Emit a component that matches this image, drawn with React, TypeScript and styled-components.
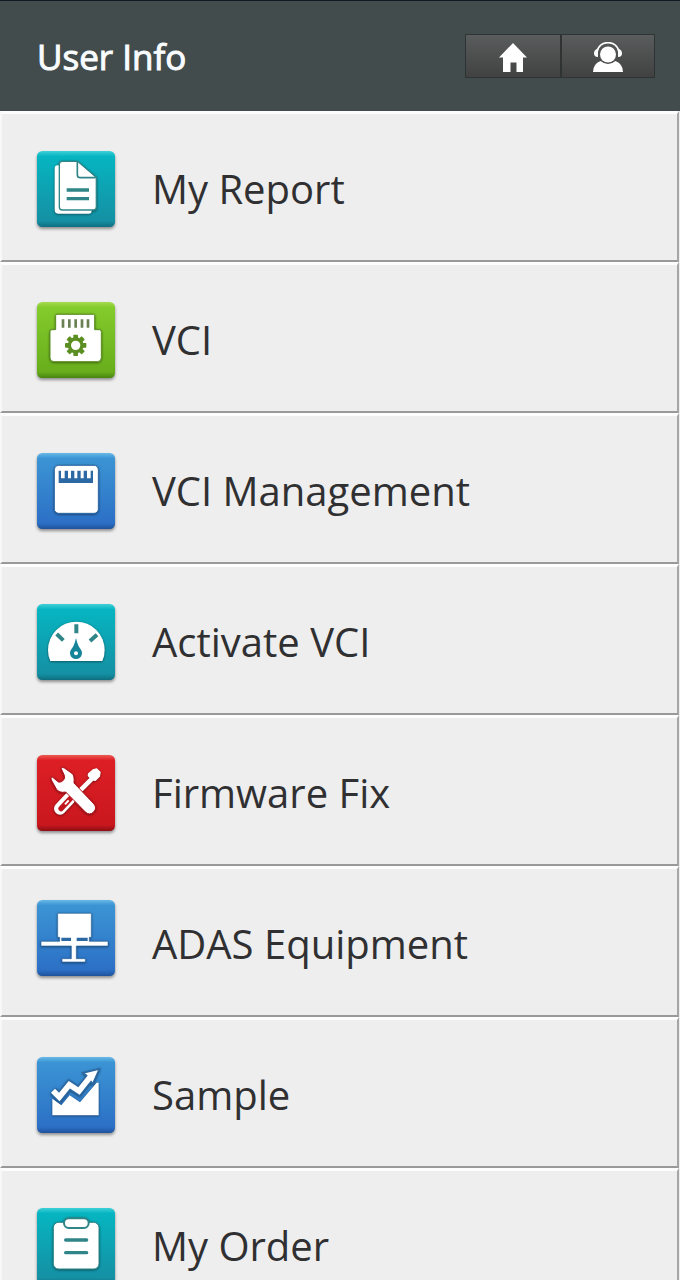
import React from "react";
import styled, { createGlobalStyle } from "styled-components";

const GlobalStyle = createGlobalStyle`
  *, *::before, *::after { box-sizing: border-box; }
  body {
    margin: 0;
    background: #eeeeee;
    font-family: "Open Sans", "Noto Sans", sans-serif;
  }
`;

const Screen = styled.div`
  display: flex;
  flex-direction: column;
  height: 100vh;
`;

const Header = styled.header`
  flex: none;
  display: flex;
  align-items: center;
  justify-content: space-between;
  height: 111px;
  padding: 0 25px 0 37px;
  border-top: 1px solid #111725;
  background: #434c4c;
`;

const Title = styled.h1`
  margin: 0;
  padding-top: 2px;
  color: #f8fcff;
  font-size: 35px;
  line-height: 44px;
  font-weight: 400;
  -webkit-text-stroke: 1px #f8fcff;
`;

const Toolbar = styled.nav`
  display: flex;
  border: 1px solid #2e3333;
`;

const ToolButton = styled.button`
  display: flex;
  align-items: center;
  justify-content: center;
  width: 94px;
  height: 42px;
  padding: 2px 0 0;
  border: 0;
  background: linear-gradient(#5a5d5d, #414141);
  cursor: pointer;

  & + & {
    border-left: 2px solid #303333;
  }
`;

const Menu = styled.ul`
  flex: 1;
  min-height: 0;
  margin: 0;
  padding: 0;
  list-style: none;
  overflow-y: auto;
  scrollbar-width: none;
`;

const MenuLink = styled.a`
  display: flex;
  align-items: center;
  gap: 37px;
  height: 151px;
  margin-right: 1px;
  padding: 4px 36px 0 35px;
  border-top: 3px solid #fdfdfd;
  border-left: 2px solid #f8f8f8;
  border-right: 2px solid #a6a6a6;
  border-bottom: 2px solid #999999;
  background: #eeeeee;
  color: #303032;
  font-size: 40px;
  line-height: 54px;
  text-decoration: none;
`;

const Art = styled.svg`
  flex: none;
  display: block;
  overflow: visible;
`;

const Tile = styled.rect`
  filter: drop-shadow(0 6px 5px rgba(0, 0, 0, 0.4));
`;

const Glyph = styled.g`
  filter: drop-shadow(0 2px 3px rgba(0, 0, 0, 0.5));
`;

type Tone = "teal" | "green" | "blue" | "red";

const tones: Record<Tone, { top: string; high: string; low: string; edge: string }> = {
  teal: { top: "#3fd0d8", high: "#06b5c1", low: "#1590a4", edge: "#0d6f80" },
  green: { top: "#a5dc50", high: "#84cb2c", low: "#68ae1c", edge: "#47840f" },
  blue: { top: "#67b9e6", high: "#3b94d4", low: "#2c70c6", edge: "#1f529c" },
  red: { top: "#ee5a52", high: "#dd1f25", low: "#c9171e", edge: "#8c0e14" },
};

interface TileIconProps {
  id: string;
  tone: Tone;
  /* Extra canvas below the tile, in pixels. */
  footer?: number;
  children: React.ReactNode;
}

function TileIcon({ id, tone, footer = 0, children }: TileIconProps) {
  const t = tones[tone];
  return (
    <Art width={78} height={76 + footer} viewBox={`0 0 234 ${228 + footer * 3}`} aria-hidden="true">
      <defs>
        <linearGradient id={id} x1="0" y1="0" x2="0" y2="1">
          <stop offset="0" stopColor={t.top} />
          <stop offset="0.07" stopColor={t.high} />
          <stop offset="0.92" stopColor={t.low} />
          <stop offset="1" stopColor={t.edge} />
        </linearGradient>
      </defs>
      <Tile width="234" height="228" rx="16" fill={`url(#${id})`} />
      <Glyph>{children}</Glyph>
    </Art>
  );
}

const gearTeeth = [0, 45, 90, 135, 180, 225, 270, 315];

const items: { label: string; icon: React.ReactNode }[] = [
  {
    label: "My Report",
    icon: (
      <TileIcon id="report" tone="teal">
        <path d="M62 43h50v132h52v4q0 9-9 9H65q-12 0-12-12V52q0-9 9-9z" fill="#fff" />
        <path d="M76 31h45l57 49v88q0 9-9 9H76q-9 0-9-9V40q0-9 9-9z" fill="#fff" stroke="#2f8587" strokeWidth="4" />
        <path d="M121 33v38q0 9 9 9h46" fill="#fff" stroke="#2f8587" strokeWidth="5" />
        <path d="M89 117h67M89 143h67" stroke="#2f8587" strokeWidth="10" />
      </TileIcon>
    ),
  },
  {
    label: "VCI",
    icon: (
      <TileIcon id="vci" tone="green">
        <path d="M60 37h109q4 0 4 4v42h14q6 0 6 6v78q0 12-12 12H51q-12 0-12-12V89q0-6 6-6h11V41q0-4 4-4z" fill="#fff" stroke="#5b8f22" strokeWidth="3" />
        <path d="M78 52v25M97 52v25M116 52v25M135 52v25M153 52v25" stroke="#688052" strokeWidth="8" />
        <g fill="#5b8f22">
          {gearTeeth.map((a) => (
            <rect key={a} x="109" y="98" width="14" height="15" rx="2" transform={`rotate(${a} 116 130)`} />
          ))}
        </g>
        <circle cx="116" cy="130" r="19" fill="#fff" stroke="#5b8f22" strokeWidth="10" />
      </TileIcon>
    ),
  },
  {
    label: "VCI Management",
    icon: (
      <TileIcon id="management" tone="blue">
        <rect x="52" y="37" width="132" height="144" rx="13" fill="#fff" stroke="#2c69a4" strokeWidth="3" />
        <path d="M65 53h7v23h11V53h10v23h9V53h10v23h9V53h10v23h9V53h10v23h11V53h7v37H65z" fill="#2c69a4" />
      </TileIcon>
    ),
  },
  {
    label: "Activate VCI",
    icon: (
      <TileIcon id="activate" tone="teal">
        <path d="M40 171Q33 157 33 138A85 85 0 0 1 203 138Q203 157 196 171z" fill="#fff" />
        <path d="M118 61v27M59 90l20 19M180 92l-21 19" stroke="#2f8587" strokeWidth="12" />
        <path d="M117 102q5 23 14 34a18 18 0 1 1-28 0q9-11 14-34z" fill="#16859a" />
        <circle cx="117" cy="148" r="6" fill="#fff" />
      </TileIcon>
    ),
  },
  {
    label: "Firmware Fix",
    icon: (
      <TileIcon id="firmware" tone="red">
        <path d="M169 67L126 110" stroke="#fff" strokeWidth="14" />
        <path d="M168 45l11-3 10 10-2 12-12 12-9-2-12-12 1-6z" fill="#fff" stroke="#fff" strokeWidth="4" strokeLinejoin="round" />
        <path d="M98 130L69 161" stroke="#fff" strokeWidth="36" strokeLinecap="round" />
        <path d="M100 131L72 161" stroke="#c0171e" strokeWidth="16" strokeLinecap="round" />
        <path d="M95 136L84 148" stroke="#fff" strokeWidth="6" />
        <path
          d="M72 40q5-5 10-1l24 17q7 6 5 28l60 63q10 12-1 24-12 11-24 1L86 111q-19 4-28-9L43 75q-3-6 3-9l18 15q9 2 15-5 6-6 3-15z"
          fill="#fff"
          stroke="#b3131b"
          strokeWidth="3"
        />
      </TileIcon>
    ),
  },
  {
    label: "ADAS Equipment",
    icon: (
      <TileIcon id="adas" tone="blue" footer={12}>
        <path
          d="M62 40h101v72h-6v12h56v14h-95v38h27v10H75v-10h28v-38H12v-14h56v-12h-6z"
          fill="#fff"
          stroke="#2c69a4"
          strokeWidth="2"
        />
        <path d="M73 113h29v10H73zM119 113h33v10h-33z" fill="#2c69a4" />
      </TileIcon>
    ),
  },
  {
    label: "Sample",
    icon: (
      <TileIcon id="sample" tone="blue">
        <path d="M46 125l27 20 25-30 31 21 50-59h6v98H46z" fill="#fff" />
        <path d="M48 101l19 19 30-37 29 19 35-43" fill="none" stroke="#2c69a4" strokeWidth="25" />
        <path d="M187 36l-49 12 11 8 18 25z" fill="#fff" stroke="#2c69a4" strokeWidth="5" />
        <path d="M48 101l19 19 30-37 29 19 40-50" fill="none" stroke="#fff" strokeWidth="17" />
      </TileIcon>
    ),
  },
  {
    label: "My Order",
    icon: (
      <TileIcon id="order" tone="teal">
        <rect x="49" y="43" width="137" height="140" rx="16" fill="#fff" stroke="#2f8587" strokeWidth="3" />
        <rect x="81" y="31" width="74" height="29" rx="14" fill="#fff" stroke="#2f8587" strokeWidth="6" />
        <path d="M86 96h63M86 134h63" stroke="#2f8587" strokeWidth="10" strokeLinecap="round" />
      </TileIcon>
    ),
  },
];

function HomeIcon() {
  return (
    <svg width="28" height="30" viewBox="0 0 28 30" fill="#fff" aria-hidden="true">
      <path d="M14 1l14 14.500h-4V30h-6.500V20.500h-6V30H4V15.500H0z" />
    </svg>
  );
}

function SupportIcon() {
  return (
    <svg width="32" height="30" viewBox="0 0 32 30" fill="#fff" aria-hidden="true">
      <circle cx="16" cy="12.500" r="8" />
      <path d="M5 10C7-2.500 25-2.500 27 10" fill="none" stroke="#fff" strokeWidth="1.600" />
      <path d="M6 7v8c-3 0-4-1.500-4-4 0-2 1.500-4 4-4zM26 7v8c3 0 4-1.500 4-4 0-2-1.500-4-4-4z" />
      <path d="M8.500 19q7.500 6 15 0Q31 22 31 30H1q0-8 7.500-11z" />
    </svg>
  );
}

export default function App() {
  return (
    <>
      <GlobalStyle />
      <Screen>
        <Header>
          <Title>User Info</Title>
          <Toolbar aria-label="Shortcuts">
            <ToolButton type="button" aria-label="Home">
              <HomeIcon />
            </ToolButton>
            <ToolButton type="button" aria-label="Support">
              <SupportIcon />
            </ToolButton>
          </Toolbar>
        </Header>
        <Menu>
          {items.map(({ label, icon }) => (
            <li key={label}>
              <MenuLink href="#">
                {icon}
                {label}
              </MenuLink>
            </li>
          ))}
        </Menu>
      </Screen>
    </>
  );
}
